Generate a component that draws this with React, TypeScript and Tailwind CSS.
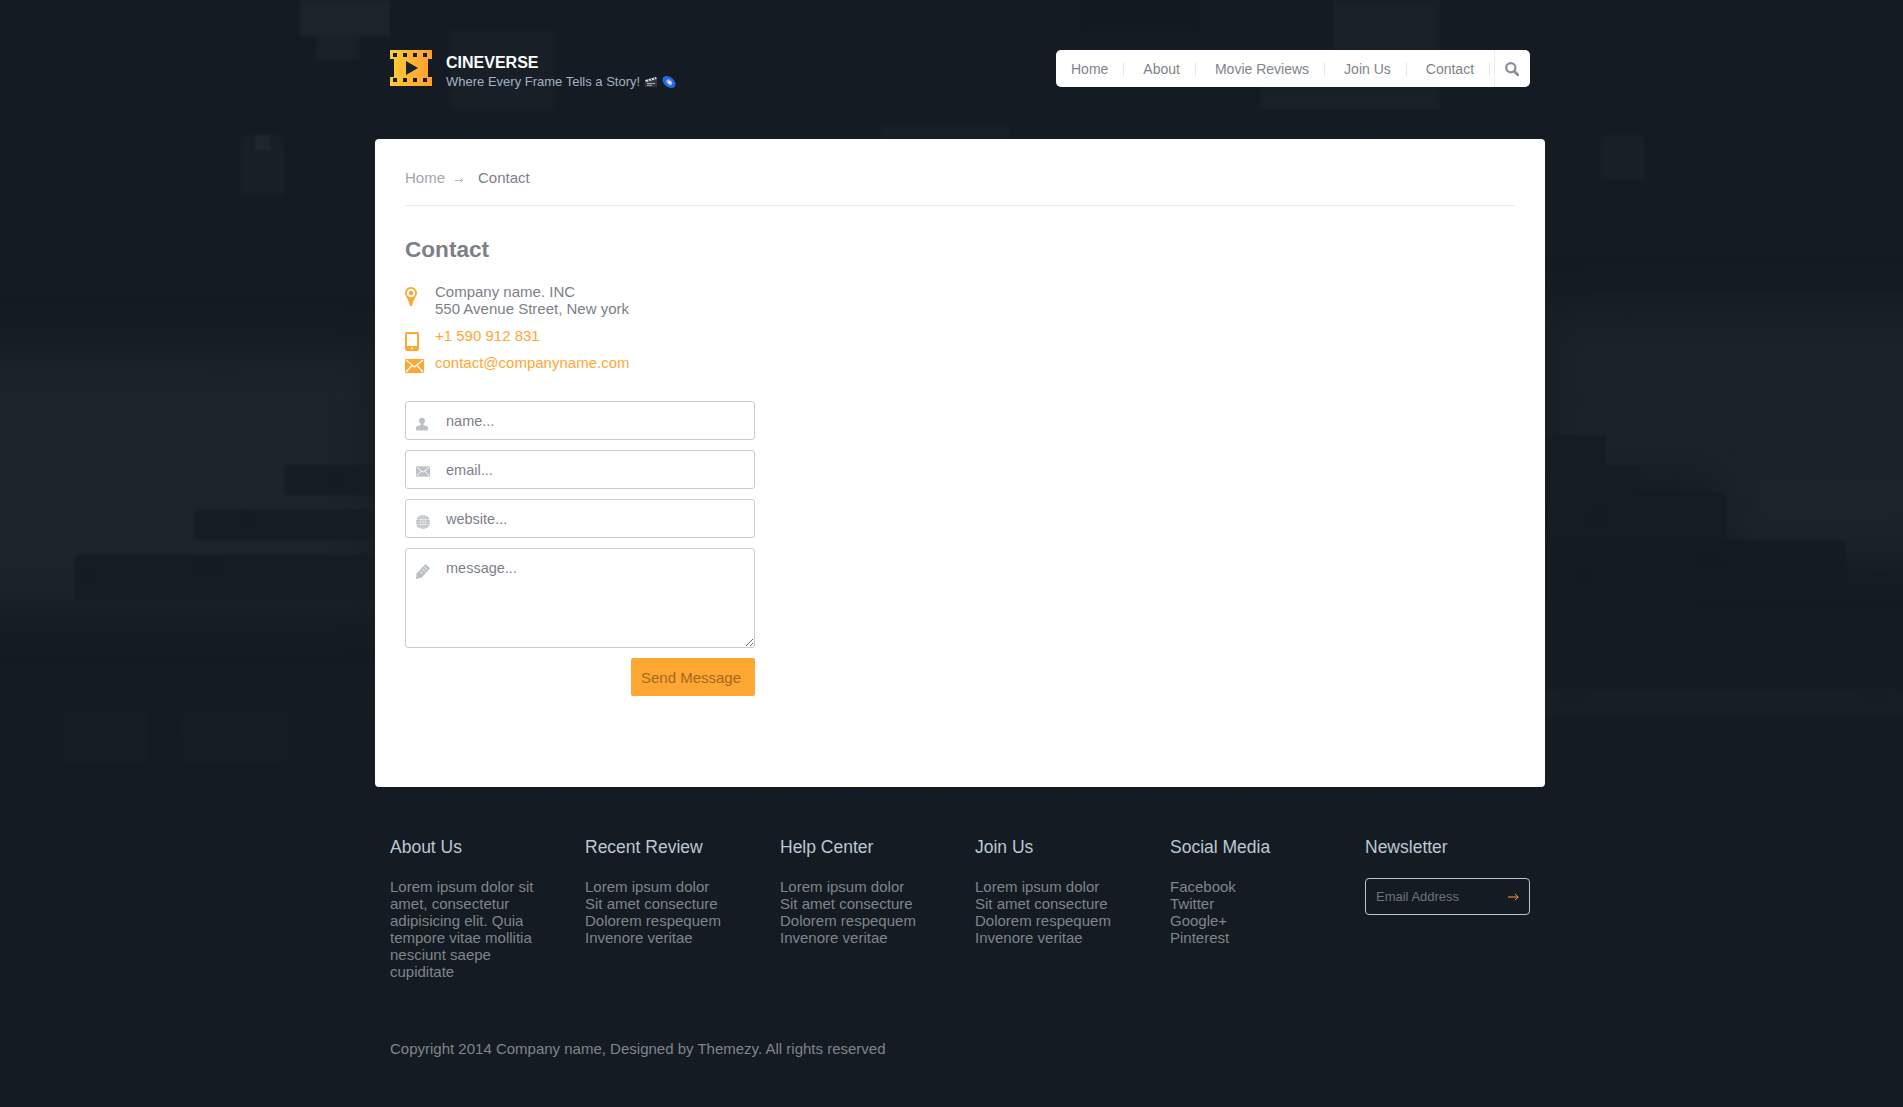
import { FC, ReactNode } from "react";

const navLinks = ["Home", "About", "Movie Reviews", "Join Us", "Contact"];

const reviewLines = ["Lorem ipsum dolor", "Sit amet consecture", "Dolorem respequem", "Invenore veritae"];

const footerCols = [
  {
    title: "About Us",
    lines: ["Lorem ipsum dolor sit", "amet, consectetur", "adipisicing elit. Quia", "tempore vitae mollitia", "nesciunt saepe", "cupiditate"],
  },
  { title: "Recent Review", lines: reviewLines },
  { title: "Help Center", lines: reviewLines },
  { title: "Join Us", lines: reviewLines },
  { title: "Social Media", lines: ["Facebook", "Twitter", "Google+", "Pinterest"] },
];

type Block = [number, number, number, number, string];

// wide light bands of the photo behind the page, blurred a lot
const bands: Block[] = [
  [-60, 350, 435, 260, "#1c242a"],
  [1545, 310, 420, 170, "#1b2329"],
  [1720, 480, 243, 80, "#1c242a"],
];

// sharper blocks of the same photo: x, y, w, h, colour
const blocks: Block[] = [
  // dark steps cutting into the bands
  [285, 465, 90, 30, "#151c22"],
  [195, 510, 180, 30, "#151c22"],
  [75, 555, 300, 45, "#151c22"],
  [1545, 435, 60, 31, "#151c22"],
  [1545, 466, 95, 27, "#151c22"],
  [1545, 493, 180, 47, "#151c22"],
  [1545, 540, 300, 60, "#141b21"],
  [1545, 689, 358, 29, "#171e25"],
  // lighter patches at the top
  [300, 0, 90, 36, "#1c242b"],
  [316, 36, 44, 24, "#192128"],
  [450, 30, 105, 80, "#181f26"],
  [240, 135, 45, 60, "#182026"],
  [255, 135, 15, 15, "#1f272e"],
  [1333, 0, 107, 50, "#192128"],
  [1260, 87, 180, 23, "#192128"],
  [1600, 135, 45, 45, "#182026"],
  [880, 125, 130, 14, "#182026"],
  [1080, 0, 120, 30, "#12191f"],
  // lower part of the page
  [60, 705, 90, 60, "#151c23"],
  [180, 705, 110, 60, "#151c23"],
];

// tile of tiny darker cells that gives the photo its grain
const grain: [number, number, number, number][] = [
  [15, 30, 15, 15],
  [60, 90, 30, 15],
  [120, 15, 15, 30],
  [165, 120, 15, 15],
  [210, 60, 30, 15],
  [30, 165, 15, 30],
  [90, 210, 15, 15],
  [150, 180, 30, 15],
  [240, 195, 15, 30],
  [195, 255, 30, 15],
  [75, 270, 15, 15],
  [270, 135, 15, 15],
];

const FilmLogo: FC = () => (
  <svg width="42" height="36" viewBox="0 0 42 36" className="shrink-0">
    <defs>
      <linearGradient id="film" x1="0" y1="0" x2="1" y2="0">
        <stop offset="0" stopColor="#ffcb37" />
        <stop offset="1" stopColor="#ff9f2e" />
      </linearGradient>
    </defs>
    <path
      fillRule="evenodd"
      fill="url(#film)"
      d="M0 0h42v9h-4v18h4v9H0v-9h4V9H0zM3 3v4h4V3zM13 3v4h4V3zM23 3v4h4V3zM33 3v4h4V3zM3 28v4h4v-4zM13 28v4h4v-4zM23 28v4h4v-4zM33 28v4h4v-4z"
    />
    <path d="M16 11l12 7-12 7z" fill="#1a2229" />
  </svg>
);

const ClapperIcon: FC = () => (
  <svg width="12" height="10" viewBox="0 0 12 10" className="ml-[5px]">
    <rect y="3" width="12" height="7" fill="#33383d" />
    <path d="M0 3L11 0l1 2L1 5z" fill="#d8d8d8" />
    <path d="M3 2.200l1 2M6 1.400l1 2M9 .6l1 2" stroke="#33383d" strokeWidth="1" />
    <path d="M2 6.500h8M2 8.300h5" stroke="#c8c8c8" strokeWidth=".8" />
  </svg>
);

const DiscIcon: FC = () => (
  <svg width="14" height="14" viewBox="0 0 14 14" className="ml-[5px]">
    <ellipse cx="7" cy="7" rx="7.400" ry="5" fill="#1a6fe0" transform="rotate(40 7 7)" />
    <ellipse cx="7.400" cy="7" rx="3.400" ry="2.200" fill="#b9a8ff" transform="rotate(40 7 7)" />
    <ellipse cx="7.600" cy="7" rx="1.400" ry="1" fill="#ffffff" transform="rotate(40 7 7)" />
  </svg>
);

const SearchIcon: FC = () => (
  <svg width="14" height="14" viewBox="0 0 14 14" className="mr-[1px]">
    <circle cx="5.800" cy="5.800" r="4.600" fill="none" stroke="#8a8e96" strokeWidth="2.300" />
    <path d="M9.200 9.200L13 13" stroke="#8a8e96" strokeWidth="2.800" strokeLinecap="round" />
  </svg>
);

const PinIcon: FC = () => (
  <svg width="12" height="19" viewBox="0 0 12 19" className="block">
    <path
      fillRule="evenodd"
      fill="#ffa733"
      d="M6 0a6 6 0 0 1 6 6c0 3-3.500 6-5 13h-2C3.500 12 0 9 0 6a6 6 0 0 1 6-6zM6 1.700a4.300 4.300 0 1 0 0 8.600 4.300 4.300 0 0 0 0-8.600zM6 3.800a2.200 2.200 0 1 1 0 4.400 2.200 2.200 0 0 1 0-4.400z"
    />
  </svg>
);

const PhoneIcon: FC = () => (
  <svg width="14" height="19" viewBox="0 0 14 19" className="block">
    <path
      fillRule="evenodd"
      fill="#ffa733"
      d="M2 0h10a2 2 0 0 1 2 2v15a2 2 0 0 1-2 2H2a2 2 0 0 1-2-2V2a2 2 0 0 1 2-2zM2 2v12h10V2zM6 15.500v1.500h2v-1.500z"
    />
  </svg>
);

const MailIcon: FC<{ color: string; w: number; h: number }> = ({ color, w, h }) => (
  <svg width={w} height={h} viewBox="0 0 19 14" className="block">
    <rect width="19" height="14" fill={color} />
    <path d="M1 1l8.500 7L18 1M1 13l6-6.500M18 13l-6-6.500" fill="none" stroke="#fff" strokeWidth="1.300" />
  </svg>
);

const UserIcon: FC = () => (
  <svg width="12" height="14" viewBox="0 0 13 14">
    <circle cx="6.500" cy="3.500" r="3.200" fill="#bcc0c7" />
    <path d="M5 6h3v2l4.500 1.800c.4.200.5.500.5 1V14H0v-3.200c0-.5.100-.8.500-1L5 8z" fill="#bcc0c7" />
  </svg>
);

const GlobeIcon: FC = () => (
  <svg width="14" height="14" viewBox="0 0 14 14">
    <circle cx="7" cy="7" r="7" fill="#bcc0c7" />
    <path d="M0 4.500h14M0 7h14M0 9.500h14M4.700 0v14M7 0v14M9.300 0v14" stroke="#fff" strokeWidth=".5" />
  </svg>
);

const PencilIcon: FC = () => (
  <svg width="14" height="15" viewBox="0 0 14 15">
    <path d="M9.500 0L14 4.200 6 13.500 0 15l.5-5.500z" fill="#bcc0c7" />
    <path d="M8.500 3l2.500 2.400M6.500 5.200L9 7.600M4.500 7.500L7 9.800" stroke="#fff" strokeWidth=".8" />
  </svg>
);

const Field: FC<{ placeholder: string; icon: ReactNode }> = ({ placeholder, icon }) => (
  <div className="relative">
    <span className="absolute left-[11px] top-[16px] flex">{icon}</span>
    <input
      placeholder={placeholder}
      className="block h-[39px] w-full rounded-[3px] border border-[#cccccc] pl-10 pr-3 text-[14.500px] text-[#7b7f88] outline-none placeholder:text-[#7b7f88]"
    />
  </div>
);

const App: FC = () => {
  return (
    <div className="relative min-h-[1107px] overflow-hidden bg-[#141b22] font-['Liberation_Sans',Arial,sans-serif] text-[15px] leading-[17px]">
      {/* blurred photo texture */}
      <svg className="absolute inset-0 h-full w-full" aria-hidden="true">
        <defs>
          <filter id="wide" colorInterpolationFilters="sRGB" x="-30%" y="-30%" width="160%" height="160%">
            <feGaussianBlur stdDeviation="22" />
          </filter>
          <filter id="soft" colorInterpolationFilters="sRGB">
            <feGaussianBlur stdDeviation="1.500" />
          </filter>
          <pattern id="grain" width="300" height="300" patternUnits="userSpaceOnUse">
            {grain.map(([x, y, w, h], i) => (
              <rect key={i} x={x} y={y} width={w} height={h} fill="#0d141a" opacity={0.05} />
            ))}
          </pattern>
        </defs>
        <g filter="url(#wide)">
          {bands.map(([x, y, w, h, fill], i) => (
            <rect key={i} x={x} y={y} width={w} height={h} fill={fill} />
          ))}
        </g>
        <g filter="url(#soft)">
          {blocks.map(([x, y, w, h, fill], i) => (
            <rect key={i} x={x} y={y} width={w} height={h} fill={fill} />
          ))}
        </g>
        <rect width="100%" height="100%" fill="url(#grain)" />
      </svg>

      <div className="relative ml-[375px] w-[1170px]">
        <header className="flex h-[139px] items-start justify-between px-[15px] pt-[50px]">
          <div className="flex items-start gap-[14px]">
            <FilmLogo />
            <div className="pt-[3px]">
              <div className="text-[16px] font-bold leading-[19px] text-white">CINEVERSE</div>
              <div className="mt-[2px] flex items-center text-[13px] leading-[16px] text-[#a3b1c6]">
                Where Every Frame Tells a Story!
                <ClapperIcon />
                <DiscIcon />
              </div>
            </div>
          </div>
          <nav className="flex h-[37px] w-[474px] items-center rounded-[5px] bg-white text-[14px] text-[#80848c]">
            {navLinks.map((link) => (
              <a
                key={link}
                className="flex h-[14px] items-center border-r border-[#e6e6e6] pl-[19px] pr-[15px] pt-[1px] first:pl-[15px]"
              >
                {link}
              </a>
            ))}
            <span className="ml-[4px] flex h-full flex-1 items-center justify-center border-l border-[#eeeeee]">
              <SearchIcon />
            </span>
          </nav>
        </header>

        <main className="h-[648px] rounded-[4px] bg-white px-[30px] pt-[30px] text-[#7b7f88]">
          <div className="flex h-[37px] items-start border-b border-[#eaeaea]">
            <span className="text-[#a2a5ac]">Home</span>
            <svg width="8" height="5" viewBox="0 0 8 5" className="ml-[10px] mr-[15px] mt-[9px]">
              <path d="M0 2.500h7.500M5.500.5l2 2-2 2" fill="none" stroke="#a2a5ac" strokeWidth=".8" />
            </svg>
            <span>Contact</span>
          </div>

          <h1 className="mt-[31px] text-[22.600px] font-bold leading-[26px]">Contact</h1>

          <div className="mt-[20px] flex flex-col">
            <div className="flex">
              <span className="w-[30px] pt-[4px]"><PinIcon /></span>
              <div>
                Company name. INC
                <br />
                550 Avenue Street, New york
              </div>
            </div>
            <div className="mt-[10px] flex text-[#ffa733]">
              <span className="w-[30px] pt-[5px]"><PhoneIcon /></span>
              +1 590 912 831
            </div>
            <div className="mt-[3px] flex text-[#ffa733]">
              <span className="w-[30px] pt-[5px]"><MailIcon color="#ffa733" w={19} h={14} /></span>
              contact@companyname.com
            </div>
          </div>

          <form className="mt-[28px] flex w-[350px] flex-col gap-[10px]">
            <Field placeholder="name..." icon={<UserIcon />} />
            <Field placeholder="email..." icon={<MailIcon color="#bcc0c7" w={14} h={11} />} />
            <Field placeholder="website..." icon={<GlobeIcon />} />
            <div className="relative">
              <span className="absolute left-[11px] top-[16px] flex"><PencilIcon /></span>
              <textarea
                placeholder="message..."
                className="block h-[100px] w-full rounded-[3px] border border-[#cccccc] pl-10 pr-3 pt-[11px] text-[14.500px] leading-[17px] text-[#7b7f88] outline-none placeholder:text-[#7b7f88]"
              />
            </div>
            <div className="flex justify-end">
              <button
                type="button"
                className="h-[38px] w-[124px] rounded-[2px] bg-[#ffa733] pr-[4px] text-[15px] text-[#a56a1e]"
              >
                Send Message
              </button>
            </div>
          </form>
        </main>

        <footer className="px-[15px] pt-[50px]">
          <div className="flex">
            {footerCols.map((col) => (
              <div key={col.title} className="w-[195px]">
                <h3 className="text-[17.500px] leading-[20px] text-[#bcc8d4]">{col.title}</h3>
                <ul className="mt-[21px] text-[#80858a]">
                  {col.lines.map((line) => (
                    <li key={line}>{line}</li>
                  ))}
                </ul>
              </div>
            ))}
            <div className="w-[165px]">
              <h3 className="text-[17.500px] leading-[20px] text-[#bcc8d4]">Newsletter</h3>
              <div className="mt-[21px] flex h-[37px] items-center justify-between rounded-[4px] border border-[#c0c4cc] px-[10px] text-[13px] text-[#6f7275]">
                Email Address
                <svg width="11" height="8" viewBox="0 0 11 8">
                  <path d="M0 4h10M7 .8L10.200 4 7 7.200" fill="none" stroke="#ff9f2e" strokeWidth="1" />
                </svg>
              </div>
            </div>
          </div>
          <p className="mt-[60px] text-[#80858a]">Copyright 2014 Company name, Designed by Themezy. All rights reserved</p>
        </footer>
      </div>
    </div>
  );
};

export default App;
